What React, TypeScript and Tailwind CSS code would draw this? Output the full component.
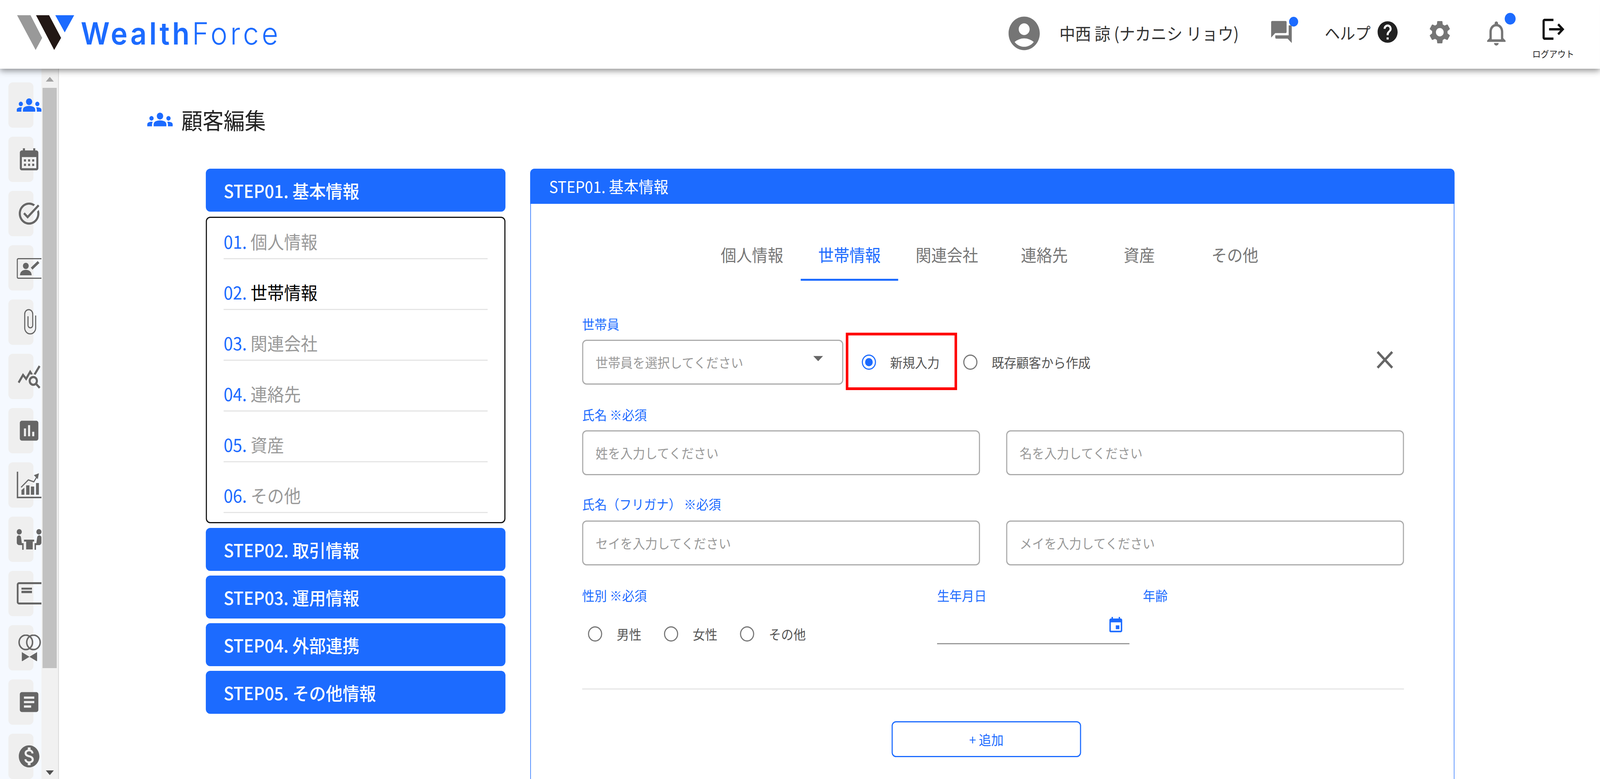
import type { ReactNode } from "react";
import {
  MdAccountCircle,
  MdArticle,
  MdAssessment,
  MdArrowDropDown,
  MdCalendarMonth,
  MdClose,
  MdEvent,
  MdForum,
  MdGroups,
  MdHelp,
  MdLogout,
  MdMonetizationOn,
  MdOutlineNotifications,
  MdOutlineQueryStats,
  MdOutlineTaskAlt,
  MdSettings,
} from "react-icons/md";

const Logo = () => (
  <div className="flex items-center">
    <svg width="204" height="176" viewBox="0 0 204 176" className="shrink-0">
      <polygon points="47,39 84,39 116,97 98,128" fill="#999999" />
      <polygon points="99,39 135,39 168,97 149,128" fill="#231815" />
      <polygon points="152,39 204,39 178,83" fill="#1c6bff" />
    </svg>
    <div className="mb-[5px] ml-[18px] flex font-['Inter',sans-serif] text-[78px] leading-none text-[#1c6bff]">
      <span className="font-semibold tracking-[7px]">Wealth</span>
      <span className="font-light tracking-[8px]">Force</span>
    </div>
  </div>
);

const Dot = ({ className }: { className: string }) => (
  <span className={`absolute rounded-full bg-[#1c6bff] ${className}`} />
);

const Header = () => (
  <header className="relative z-10 flex h-[176px] shrink-0 items-center bg-white pr-[70px] shadow-[0_5px_16px_rgba(0,0,0,0.45)]">
    <Logo />
    <div className="ml-auto flex h-full items-center pb-[6px]">
      <MdAccountCircle size={103} color="#757575" />
      <span className="ml-[45px] whitespace-nowrap text-[43.5px] text-[#333]">中西 諒 (ナカニシ リョウ)</span>
      <div className="relative ml-[83px] mb-[6px]">
        <MdForum size={68} color="#757575" />
        <Dot className="left-[55px] top-[-5px] h-[25px] w-[25px]" />
      </div>
      <span className="ml-[85px] mb-[6px] whitespace-nowrap text-[42px] text-[#333]">ヘルプ</span>
      <MdHelp size={66} color="#212121" className="ml-[14px] mb-[6px]" />
      <MdSettings size={71} color="#757575" className="ml-[75px] mb-[6px]" />
      <div className="relative ml-[82px]">
        <MdOutlineNotifications size={76} color="#757575" />
        <Dot className="left-[61px] top-[-14px] h-[30px] w-[30px]" />
      </div>
      <div className="ml-[60px] flex w-[117px] flex-col items-center self-start pt-[39px]">
        <MdLogout size={72} color="#111" />
        <span className="mt-[12px] whitespace-nowrap text-[23px] leading-[28px] text-[#222]">ログアウト</span>
      </div>
    </div>
  </header>
);

const ContactIcon = () => (
  <svg width="68" height="68" viewBox="0 0 68 68" className="shrink-0" fill="#666">
    <rect x="1.5" y="10.5" width="72" height="50" rx="3" fill="none" stroke="#666" strokeWidth="3" />
    <circle cx="25" cy="29" r="8" />
    <path d="M9 53c0-9 7-14 16-14s16 5 16 14z" />
    <path d="M41 36l19-17" stroke="#666" strokeWidth="7" />
  </svg>
);

const ClipIcon = () => (
  <svg width="68" height="68" viewBox="0 0 68 68" className="shrink-0" fill="none" stroke="#666" strokeWidth="3">
    <path d="M52 17v32a15 15 0 0 1-30 0V13a11 11 0 0 1 22 0v29a6.5 6.5 0 0 1-13 0V19" />
  </svg>
);

const ChartIcon = () => (
  <svg width="68" height="68" viewBox="0 0 68 68" className="shrink-0" fill="#666">
    <path d="M0 0h4v64h64v4H0z" />
    <path d="M13 47l8-6v18h-8zM26 35h9v24h-9zM39 38h9v21h-9zM53 29h8v30h-8z" />
    <path d="M12 40l20-19 15 5 9-14" fill="none" stroke="#666" strokeWidth="3" />
    <path d="M47 9l14-5-3 15z" />
  </svg>
);

const MeetingIcon = () => (
  <svg width="68" height="68" viewBox="0 0 68 68" className="shrink-0" fill="#666">
    <circle cx="7" cy="15" r="7" />
    <circle cx="61" cy="15" r="7" />
    <path d="M0 30a6 6 0 0 1 12 0l2 14h5v17h-4V49H7c-4 0-7-3-7-7z" />
    <path d="M68 30a6 6 0 0 0-12 0l-2 14h-5v17h4V49h8c4 0 7-3 7-7z" />
    <path d="M20 35h28v5h-4v20H26V40h-6z" />
  </svg>
);

const CardIcon = () => (
  <svg width="68" height="68" viewBox="0 0 68 68" className="shrink-0" fill="#666">
    <rect x="2.5" y="7.5" width="72" height="52" rx="4" fill="none" stroke="#666" strokeWidth="5" />
    <path d="M13 19h29v5H13zM13 27h29v6H13z" />
  </svg>
);

const RingsIcon = () => (
  <svg width="68" height="68" viewBox="0 0 68 68" className="shrink-0" fill="#666">
    <circle cx="25" cy="20" r="18.5" fill="none" stroke="#666" strokeWidth="4" />
    <circle cx="46" cy="20" r="18.5" fill="none" stroke="#666" strokeWidth="4" />
    <path d="M14 45l21 12-21 12zM56 45L35 57l21 12z" />
  </svg>
);

const sideIcons: ReactNode[] = [
  <MdGroups key="groups" size={68} color="#1c6bff" className="shrink-0" />,
  <MdCalendarMonth key="calendar" size={68} color="#666" className="shrink-0" />,
  <MdOutlineTaskAlt key="task" size={68} color="#666" className="shrink-0" />,
  <ContactIcon key="contact" />,
  <ClipIcon key="clip" />,
  <MdOutlineQueryStats key="stats" size={68} color="#666" className="shrink-0" />,
  <MdAssessment key="assessment" size={68} color="#666" className="shrink-0" />,
  <ChartIcon key="chart" />,
  <MeetingIcon key="meeting" />,
  <CardIcon key="card" />,
  <RingsIcon key="rings" />,
  <MdArticle key="article" size={68} color="#666" className="shrink-0" />,
  <MdMonetizationOn key="money" size={68} color="#666" className="shrink-0" />,
];

const Sidebar = () => (
  <aside className="flex w-[162px] shrink-0">
    <div className="flex w-[114px] flex-col gap-[23px] overflow-hidden bg-[#f5f9ff] pl-[23px] pt-[35px]">
      {sideIcons.map((icon, i) => (
        <div key={i} className="flex h-[116px] w-[69px] shrink-0 items-center rounded-[12px] bg-[#efefef] pl-[23px]">
          {icon}
        </div>
      ))}
    </div>
    <div className="flex w-[48px] flex-col items-center border-r-[2px] border-[#d9d9d9] bg-[#f1f1f1] pr-[1px] pt-[21px]">
      <div className="h-0 w-0 border-x-[11px] border-b-[12px] border-x-transparent border-b-[#a3a3a3]" />
      <div className="mt-[16px] h-[1486px] w-[39px] bg-[#c1c1c1]" />
      <div className="mt-[262px] h-0 w-0 border-x-[11px] border-t-[12px] border-x-transparent border-t-[#505050]" />
    </div>
  </aside>
);

const Step = ({ label }: { label: string }) => (
  <div className="flex h-[110px] items-center rounded-[12px] bg-[#1c6bff] pl-[49px] text-[46px] font-medium text-white">
    {label}
  </div>
);

const subSteps = [
  { no: "01.", name: "個人情報" },
  { no: "02.", name: "世帯情報", active: true },
  { no: "03.", name: "関連会社" },
  { no: "04.", name: "連絡先" },
  { no: "05.", name: "資産" },
  { no: "06.", name: "その他" },
];

const StepNav = () => (
  <div className="flex w-[824px] shrink-0 flex-col">
    <Step label="STEP01. 基本情報" />
    <div className="mt-[13px] rounded-[12px] border-[3px] border-[#111] px-[46px] pb-[23px]">
      {subSteps.map((s, i) => (
        <div
          key={s.no}
          className={`flex items-end border-b-[3px] border-[#e5e5e5] pb-[14px] text-[46px] leading-[60px] ${i === 0 ? "h-[106px]" : "h-[130px]"}`}
        >
          <span className="text-[#1c6bff]">{s.no}&nbsp;</span>
          <span className={s.active ? "text-black" : "text-[#999]"}>{s.name}</span>
        </div>
      ))}
    </div>
    <div className="mt-[12px] flex flex-col gap-[12px]">
      <Step label="STEP02. 取引情報" />
      <Step label="STEP03. 運用情報" />
      <Step label="STEP04. 外部連携" />
      <Step label="STEP05. その他情報" />
    </div>
  </div>
);

const tabs = [
  { name: "個人情報", width: "w-[268px]" },
  { name: "世帯情報", width: "w-[268px]", active: true },
  { name: "関連会社", width: "w-[268px]" },
  { name: "連絡先", width: "w-[268px]" },
  { name: "資産", width: "w-[254px]" },
  { name: "その他", width: "w-[272px]" },
];

const Label = ({ children, className = "" }: { children: ReactNode; className?: string }) => (
  <div className={`h-[40px] text-[34px] leading-[40px] text-[#1c6bff] ${className}`}>{children}</div>
);

const TextBox = ({ placeholder }: { placeholder: string }) => (
  <div className="flex h-[115px] items-center rounded-[12px] border-[3px] border-[#ababab] pl-[34px] text-[34px] text-[#999]">
    {placeholder}
  </div>
);

const Radio = ({ checked }: { checked?: boolean }) => (
  <span
    className={`flex h-[39px] w-[39px] shrink-0 items-center justify-center rounded-full border-[3px] ${checked ? "border-[#1c6bff]" : "border-[#757575]"}`}
  >
    {checked && <span className="h-[21px] w-[21px] rounded-full bg-[#1c6bff]" />}
  </span>
);

const MemberForm = () => (
  <div className="ml-[141px] w-[2260px]">
    <Label className="mt-[91px] mb-[20px]">世帯員</Label>
    <div className="relative flex h-[115px] items-center">
      <div className="flex h-[115px] w-[718px] shrink-0 items-center rounded-[12px] border-[3px] border-[#ababab] pl-[34px] pr-[34px] text-[34px] text-[#999]">
        世帯員を選択してください
        <MdArrowDropDown size={64} color="#666" className="ml-auto mb-[22px]" />
      </div>
      <span className="ml-[51px]">
        <Radio checked />
      </span>
      <span className="ml-[39px] text-[34px] text-[#555]">新規入力</span>
      <span className="ml-[65px]">
        <Radio />
      </span>
      <span className="ml-[39px] text-[34px] text-[#555]">既存顧客から作成</span>
      <MdClose size={77} color="#666" className="ml-auto mr-[14px] mb-[12px]" />
      <div className="absolute left-[725px] top-[-18px] h-[147px] w-[306px] border-[7px] border-[#ff0000]" />
    </div>

    <Label className="mt-[57px] mb-[20px]">氏名 ※必須</Label>
    <div className="grid grid-cols-2 gap-x-[72px]">
      <TextBox placeholder="姓を入力してください" />
      <TextBox placeholder="名を入力してください" />
    </div>

    <Label className="mt-[54px] mb-[22px]">氏名（フリガナ） ※必須</Label>
    <div className="grid grid-cols-2 gap-x-[72px]">
      <TextBox placeholder="セイを入力してください" />
      <TextBox placeholder="メイを入力してください" />
    </div>

    <div className="mt-[57px] flex">
      <div className="w-[976px] shrink-0">
        <Label>性別 ※必須</Label>
        <div className="mt-[58px] flex h-[40px] items-center pl-[16px] text-[34px] text-[#555]">
          {["男性", "女性", "その他"].map((g) => (
            <div key={g} className="flex w-[209px] items-center gap-[40px]">
              <Radio />
              <span>{g}</span>
            </div>
          ))}
        </div>
      </div>
      <div className="w-[566px] shrink-0">
        <Label>生年月日</Label>
        <div className="mt-[30px] flex h-[75px] w-[529px] justify-end border-b-[3px] border-[#999] pr-[14px] pt-[3px]">
          <MdEvent size={47} color="#1c6bff" />
        </div>
      </div>
      <Label>年齢</Label>
    </div>

    <div className="mt-[113px] h-[3px] bg-[#e6e6e6]" />
    <button className="ml-[851px] mt-[81px] flex h-[92px] w-[521px] items-center justify-center rounded-[12px] border-[3px] border-[#1c6bff] text-[34px] text-[#1c6bff]">
      + 追加
    </button>
  </div>
);

const EditPanel = () => (
  <section className="min-w-0 flex-1 rounded-t-[12px] border-x-[2px] border-[#1c6bff]">
    <div className="-mx-[2px] flex h-[90px] items-center rounded-t-[12px] bg-[#1c6bff] pl-[52px] text-[41px] text-white">
      STEP01. 基本情報
    </div>
    <div className="mt-[66px] flex pl-[474px]">
      {tabs.map((t) => (
        <div
          key={t.name}
          className={`flex h-[131px] items-center justify-center border-b-[5px] text-[43px] ${t.width} ${t.active ? "border-[#1c6bff] text-[#1c6bff]" : "border-transparent text-[#777]"}`}
        >
          {t.name}
        </div>
      ))}
    </div>
    <MemberForm />
  </section>
);

export default function App() {
  // the window opens 4096 wide here, so the 4400 wide page is narrowed to fit it
  return (
    <div className="flex h-[1995px] w-[4400px] origin-top-left scale-x-[0.9309] flex-col overflow-hidden bg-white font-['Noto_Sans_CJK_JP',sans-serif]">
      <Header />
      <div className="flex min-h-0 flex-1">
        <Sidebar />
        <main className="flex min-w-0 flex-1 flex-col">
          <div className="ml-[243px] mt-[95px] flex h-[70px] items-center gap-[24px] text-[58px] text-[#222]">
            <MdGroups size={70} color="#1c6bff" />
            <h1>顧客編集</h1>
          </div>
          <div className="ml-[404px] mr-[400px] mt-[91px] flex min-h-0 flex-1 gap-[68px]">
            <StepNav />
            <EditPanel />
          </div>
        </main>
      </div>
    </div>
  );
}
